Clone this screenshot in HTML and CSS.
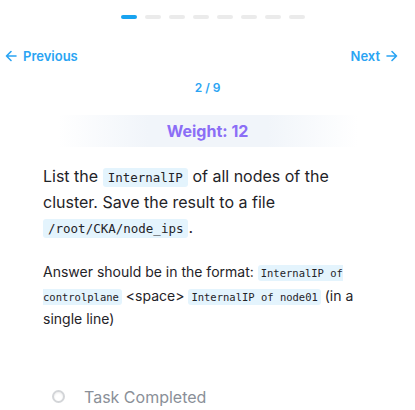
FILE: index.html
```html
<!DOCTYPE html>
<html lang="en">
<head>
    <meta charset="UTF-8">
    <meta name="viewport" content="width=device-width, initial-scale=1.0">
    <title>CKA Practice - Question 2</title>
    <link rel="stylesheet" href="styles.css">
</head>
<body>
    <div class="quiz">
        <div class="progress">
            <span class="dash active"></span>
            <span class="dash"></span>
            <span class="dash"></span>
            <span class="dash"></span>
            <span class="dash"></span>
            <span class="dash"></span>
            <span class="dash"></span>
            <span class="dash"></span>
        </div>

        <div class="nav">
            <a href="#" class="nav-link">
                <svg width="12" height="12" viewBox="0 0 12 12" fill="none" stroke="currentColor" stroke-width="1.6" stroke-linecap="round" stroke-linejoin="round"><path d="M11 6H1.5M6 1.5 1.5 6 6 10.5"/></svg>
                Previous
            </a>
            <a href="#" class="nav-link">
                Next
                <svg width="12" height="12" viewBox="0 0 12 12" fill="none" stroke="currentColor" stroke-width="1.6" stroke-linecap="round" stroke-linejoin="round"><path d="M1 6h9.5M6 1.5 10.5 6 6 10.5"/></svg>
            </a>
        </div>

        <div class="counter">2 / 9</div>

        <div class="weight">Weight: 12</div>

        <div class="question">
            <p class="task">List the <code>InternalIP</code> of all nodes of the cluster. Save the result to a file <code>/root/CKA/node_ips</code>.</p>
            <p class="hint">Answer should be in the format: <code>InternalIP of controlplane</code> &lt;space&gt; <code>InternalIP of node01</code> (in a single line)</p>
        </div>

        <label class="done">
            <span class="radio"></span>
            Task Completed
        </label>
    </div>
</body>
</html>
```

FILE: styles.css
```css
/* Page */
body {
    margin: 0;
    font-family: 'Inter', 'Noto Sans', sans-serif;
    background: #fff;
    color: #1f2328;
}

.quiz {
    padding-top: 15px;
}

/* Progress dashes */
.progress {
    display: flex;
    justify-content: center;
    gap: 8px;
    padding-left: 10px;
}

.dash {
    width: 16px;
    height: 4px;
    border-radius: 2px;
    background: #ebebeb;
}

.dash.active {
    background: #18a3f0;
}

/* Previous / Next */
.nav {
    display: flex;
    justify-content: space-between;
    padding: 0 17px 0 5px;
    margin-top: 29px;
}

.nav-link {
    display: flex;
    align-items: center;
    gap: 6px;
    color: #2aa4f3;
    font-size: 13px;
    font-weight: 600;
    text-decoration: none;
}

.counter {
    text-align: center;
    color: #2aa4f3;
    font-size: 12px;
    font-weight: 600;
    margin-top: 16px;
}

/* Weight band */
.weight {
    margin: 20px auto 0;
    width: 300px;
    padding: 6px 0;
    text-align: center;
    color: #8b6ef6;
    font-size: 16px;
    font-weight: 700;
    line-height: 20px;
    background: linear-gradient(90deg, rgba(241, 245, 250, 0), #f1f5fa 30%, #f1f5fa 70%, rgba(241, 245, 250, 0));
}

/* Question text */
.question {
    padding: 0 43px;
}

.task {
    font-size: 16px;
    line-height: 25px;
    margin: 17px 0 0;
}

.hint {
    font-size: 14px;
    line-height: 21.5px;
    margin: 20px 0 0;
}

code {
    font-family: 'DejaVu Sans Mono', monospace;
    background: #e4f4fd;
    border-radius: 3px;
    padding: 2px 5px;
}

.task code {
    font-size: 12.5px;
}

.hint code {
    font-size: 10.5px;
    padding: 2px 3px;
}

/* Completion toggle */
.done {
    display: flex;
    align-items: center;
    gap: 19px;
    margin: 57px 0 0 52px;
    color: #8a8f98;
    font-size: 16px;
}

.radio {
    width: 9px;
    height: 9px;
    border-radius: 50%;
    border: 2px solid #d3d5d8;
    background: #fff;
    box-shadow: inset 0 1px 2px rgba(0, 0, 0, 0.08);
}
```
